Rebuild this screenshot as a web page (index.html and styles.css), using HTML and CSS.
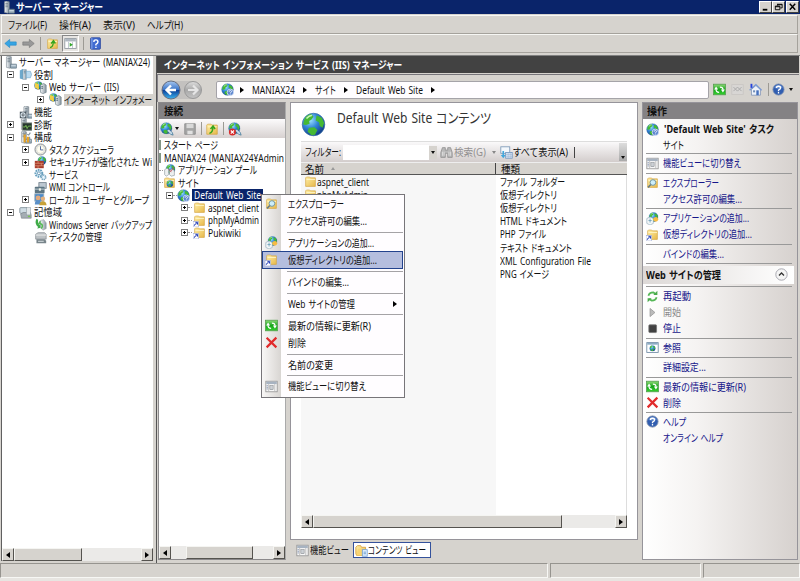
FILE: index.html
```html
<!DOCTYPE html>
<html lang="ja">
<head>
<meta charset="utf-8">
<title>サーバー マネージャー</title>
<link rel="stylesheet" href="styles.css">
</head>
<body>
<svg class="sprite" aria-hidden="true">
<defs>
<radialGradient id="sea" cx=".35" cy=".3" r=".8"><stop offset="0" stop-color="#9ee4ff"/><stop offset=".45" stop-color="#3185d8"/><stop offset="1" stop-color="#0b2d79"/></radialGradient>
<linearGradient id="gold" x2="1" y2="1"><stop offset="0" stop-color="#fff0a8"/><stop offset="1" stop-color="#e7b84a"/></linearGradient>
<linearGradient id="metal" x2="1"><stop offset="0" stop-color="#f2f5f7"/><stop offset="1" stop-color="#8996a0"/></linearGradient>
<linearGradient id="blueb" y2="1" x2="0"><stop offset="0" stop-color="#a8c8f0"/><stop offset=".48" stop-color="#3a74c8"/><stop offset=".52" stop-color="#0c4199"/><stop offset="1" stop-color="#3cb5f0"/></linearGradient>
<linearGradient id="greyb" y2="1" x2="0"><stop offset="0" stop-color="#dedede"/><stop offset=".5" stop-color="#a8a8a8"/><stop offset="1" stop-color="#c4c4c4"/></linearGradient>
<linearGradient id="green" y2="1" x2="0"><stop offset="0" stop-color="#8fdc78"/><stop offset=".5" stop-color="#19a51c"/><stop offset="1" stop-color="#35d22f"/></linearGradient>
</defs>
<symbol id="globe" viewBox="0 0 16 16"><circle cx="8" cy="8" r="7.2" fill="url(#sea)" stroke="#376fa6" stroke-width=".5"/><path d="M2 5 Q3 2 6.5 1.3 L8 3 6.6 5 5.2 5.8 5.5 7.5 3.2 8.3 1.4 8z M10 2 L13.3 3.6 14.8 7 13.8 10 12 9 11.5 6.5 9.4 5.5z M5 10 L8.6 9.7 10.5 11.5 9 14.5 6.8 14.8 4.2 12.6z" fill="#45b934"/><path d="M3.5 4.2 Q5.5 2 7 2.2" stroke="#c9f5b6" fill="none"/></symbol>
<symbol id="folder" viewBox="0 0 16 16"><path d="M2 3.5 L3 2.5 H7 L8 3.5 H14 V14 H2z" fill="url(#gold)" stroke="#d3a442" stroke-width=".8"/><path d="M3 5.5 H13.5" stroke="#fff8cc"/></symbol>
<symbol id="vdir" viewBox="0 0 16 16"><use href="#folder"/><rect y="9" width="7" height="7" fill="#fff" stroke="#7f90cc" stroke-width=".6"/><path d="M1.5 14.5 Q1.8 12 4.5 11.8 M3 10.3 H5.5 V13" fill="none" stroke="#1934b3" stroke-width="1.2"/></symbol>
<symbol id="up" viewBox="0 0 16 16"><use href="#folder"/><path d="M5 13 Q9 12 9 6 M6.3 8 L9.2 4.5 11.5 8" stroke="#35a51f" stroke-width="1.7" fill="none"/></symbol>
<symbol id="server" viewBox="0 0 16 16"><path d="M3 1 L5 0 9 1 V14 L7 15 3 14z" fill="url(#metal)" stroke="#75828b" stroke-width=".7"/><path d="M4.2 3 H7.4 M4.2 5 H7.4 M4.2 7 H7.4" stroke="#5c6e79" stroke-width=".8"/><rect x="8" y="10" width="7.5" height="5" rx=".5" fill="#93a7b5" stroke="#586d7b" stroke-width=".7"/><path d="M9 12 H14.5" stroke="#e7f2f8"/></symbol>
<symbol id="role" viewBox="0 0 16 16"><path d="M1 3 L5 1 V14 L1 13z" fill="#6ea9cc"/><path d="M5 2 H9 V14 H5z" fill="url(#metal)" stroke="#7594a8" stroke-width=".7"/><path d="M9 4 H14 L15.5 8 14 12 H9z" fill="#b9daf0" stroke="#65a1c6" stroke-width=".7"/><path d="M6 4 H8 M6 6 H8" stroke="#547f98"/></symbol>
<symbol id="webserver" viewBox="0 0 16 16"><g transform="scale(.68)"><use href="#globe" width="16" height="16"/></g><path d="M1 2 L6 4 V11 L1 8z" fill="#f1ce45"/><path d="M8 5 L12 3 15 5 V14 L11 15.5 8 14z" fill="url(#metal)" stroke="#60747e" stroke-width=".7"/><path d="M9 7 H11 M9 9 H11" stroke="#36525e"/></symbol>
<symbol id="feature" viewBox="0 0 16 16"><g transform="translate(3 0)"><use href="#server" width="16" height="16"/></g><rect x="1" y="7" width="8" height="8" fill="#4a565f"/><circle cx="5" cy="11" r="2.5" fill="none" stroke="#dde8ef" stroke-width="1.4"/><circle cx="5" cy="11" r=".8" fill="#fff"/></symbol>
<symbol id="diag" viewBox="0 0 16 16"><use href="#server"/><rect x="4" y="6" width="12" height="9" fill="#27372e" stroke="#8a958d"/><path d="M5 11 H7.5 L8.5 9 10 13 11.5 10 H15" fill="none" stroke="#83cf58"/></symbol>
<symbol id="config" viewBox="0 0 16 16"><use href="#server"/><path d="M7 3 V14 M11 7 V14" stroke="#eaa321" stroke-width="2.5"/><path d="M5 2 L7 4 9 2 M14 2 L12 5 10 4 M13 7 V14" fill="none" stroke="#8b989f" stroke-width="1.5"/></symbol>
<symbol id="clock" viewBox="0 0 16 16"><circle cx="8" cy="8" r="6.8" fill="#e5e8e7" stroke="#898d91" stroke-width="1.2"/><circle cx="8" cy="8" r="4.8" fill="#fffdf1" stroke="#c9c9bb" stroke-width=".6"/><path d="M8 4 V8.5 H11.4" fill="none" stroke="#536ba2" stroke-width="1.2"/></symbol>
<symbol id="firewall" viewBox="0 0 16 16"><g transform="translate(4 0) scale(.72)"><use href="#globe" width="16" height="16"/></g><rect x="1" y="6" width="11" height="9" fill="#a93d2b"/><path d="M1 9 H12 M1 12 H12 M5 6 V9 M9 9 V12 M5 12 V15" stroke="#e19a7f" stroke-width=".8"/></symbol>
<symbol id="gear" viewBox="0 0 16 16"><circle cx="6" cy="6.5" r="4.2" fill="#e1f1fb" stroke="#669ebd" stroke-width="2.4" stroke-dasharray="2 1"/><circle cx="6" cy="6.5" r="1.8" fill="#fff" stroke="#568aaa"/><circle cx="11.7" cy="11.5" r="2.7" fill="#e8f6ff" stroke="#79a7c0" stroke-width="2" stroke-dasharray="1.5 .7"/></symbol>
<symbol id="wmi" viewBox="0 0 16 16"><rect x="6" y="2" width="9" height="7" fill="#bdc8d1" stroke="#6f7e89"/><rect x="1" y="7" width="12" height="8" rx="1" fill="#5d7582"/><path d="M1 10 H13" stroke="#d2dde2"/><rect x="6" y="9" width="2.5" height="3" fill="#f0f3e9"/></symbol>
<symbol id="users" viewBox="0 0 16 16"><rect x="1" y="1" width="11" height="9" fill="#4d8ccc" stroke="#9badb8"/><circle cx="5" cy="6" r="3" fill="#e3aa7d"/><path d="M1 14 Q1 9 5 9 T9 14z" fill="#5b90c8"/><circle cx="11" cy="7" r="2.7" fill="#e4b27f"/><path d="M6.5 15 Q7 10 11 10 T15.5 15z" fill="#c8a238"/></symbol>
<symbol id="storage" viewBox="0 0 16 16"><rect x="1" y="2" width="9" height="7" rx="1" fill="#cfdce3" stroke="#768791"/><path d="M2 10 L5 8 H14 L15 11 V15 H3z" fill="#a4adb3" stroke="#717b81" stroke-width=".7"/><rect x="9" y="2" width="5" height="9" fill="#e2e7e9" stroke="#85949c" stroke-width=".6"/><rect x="11" y="12" width="3" height="1.3" fill="#70cc38"/></symbol>
<symbol id="backup" viewBox="0 0 16 16"><path d="M3 1 Q0 7 5 11 L4 13 9 12 8 7 7 9 Q4 6 5 2z" fill="#3faa48"/><path d="M8 3 L12 2 15 6 V13 L11 15 8 12z" fill="url(#metal)" stroke="#87939a" stroke-width=".6"/><path d="M8 4 L6 7 H8 Q12 8 9 13" fill="none" stroke="#55b956" stroke-width="2"/></symbol>
<symbol id="disk" viewBox="0 0 16 16"><path d="M2 4 L5 2 H13 L15 4 V10 H2z" fill="#bdc2c5" stroke="#737b80" stroke-width=".7"/><path d="M2 5 H15" stroke="#f5f5f5"/><path d="M3 10 H13 L15 12 V15 H3z" fill="#78858b"/><rect x="5" y="12" width="7" height="1.5" fill="#c5cdd0"/></symbol>
<symbol id="back" viewBox="0 0 16 16"><path d="M1 8 L7 3 V6 H15 V10 H7 V13z" fill="#37a5e4" stroke="#2388c8" stroke-width=".8"/></symbol>
<symbol id="fwd" viewBox="0 0 16 16"><path d="M15 8 L9 3 V6 H1 V10 H9 V13z" fill="#999" stroke="#777" stroke-width=".8"/></symbol>
<symbol id="window" viewBox="0 0 16 16"><rect x="1" y="2" width="14" height="12" fill="#fff" stroke="#889099"/><path d="M1.5 4 H14.5" stroke="#aeb7c0" stroke-width="3"/><path d="M5.5 6 V13.5 M10.5 6 V13.5" stroke="#b1bbc6"/><path d="M11 9.5 L7 7 V12z" fill="#34a72d"/></symbol>
<symbol id="feat" viewBox="0 0 16 16"><rect x="1" y="1.5" width="14" height="13" fill="#f7f7f7" stroke="#929292"/><rect x="1.5" y="2" width="13" height="3" fill="#a7b3c1"/><path d="M4.5 5 V14 M12 5 V14" stroke="#b7b7b7"/><rect x="6" y="7" width="4" height="5" fill="#ccd1d5" stroke="#777b80" stroke-width=".6"/><path d="M2 7 H3.5 M2 9 H3.5 M2 11 H3.5" stroke="#6c7fa2"/></symbol>
<symbol id="helpbook" viewBox="0 0 16 16"><rect x="2" y="1" width="12" height="14" rx="1" fill="#416bd1" stroke="#26429d"/><path d="M3.5 1 V15" stroke="#9bb7f1"/><path d="M6 6 Q6 3.5 8.5 3.5 T11 6 Q11 7.5 8.5 9 V10.5 M8.5 12 V13.5" fill="none" stroke="#fff" stroke-width="1.7"/></symbol>
<symbol id="help" viewBox="0 0 16 16"><circle cx="8" cy="8" r="7" fill="#315eb0" stroke="#9ba6b7"/><path d="M3 6 Q4 2.5 8 2.5 T13 6 Q8 8 3 6" fill="#8aafe8" opacity=".6"/><path d="M5.5 6 Q5.5 4 8 4 T10.5 6 Q10.5 7.3 8 8.7 V10 M8 11.2 V12.8" fill="none" stroke="#fff" stroke-width="1.6"/></symbol>
<symbol id="siteq" viewBox="0 0 16 16"><use href="#globe"/><circle cx="11.5" cy="11.5" r="4" fill="#5b84cf" stroke="#dce7f8"/><path d="M10 10.7 Q10 9.3 11.5 9.3 T13 10.7 Q13 11.5 11.5 12 V12.7 M11.5 13.3 V14.2" fill="none" stroke="#fff"/></symbol>
<symbol id="connect" viewBox="0 0 16 16"><g transform="scale(.9)"><use href="#globe" width="16" height="16"/></g><path d="M8 10 L10 8 14 12 15 15 12 14z" fill="#c8ddea" stroke="#356f92" stroke-width=".8"/></symbol>
<symbol id="disconnect" viewBox="0 0 16 16"><use href="#connect"/><circle cx="5" cy="11.5" r="4" fill="#d82b2b"/><path d="M3.2 9.7 L6.8 13.3 M6.8 9.7 L3.2 13.3" stroke="#fff" stroke-width="1.3"/></symbol>
<symbol id="save" viewBox="0 0 16 16"><path d="M2 2 H14 V14 H2z" fill="#a5a5a5" stroke="#8d8d8d"/><rect x="4" y="2" width="8" height="5" fill="#d9d9d9"/><rect x="5" y="10" width="6" height="4" fill="#e1e1e1"/></symbol>
<symbol id="pool" viewBox="0 0 16 16"><g transform="translate(3 0) scale(.78)"><use href="#globe" width="16" height="16"/></g><path d="M2 7 L5 5 7 7 V13 L4 15 2 13z M8 8 L11 6 14 8 V14 L10 15 8 13z" fill="#edf0f0" stroke="#7f8c92" stroke-width=".7"/><path d="M7 6 L10 10 M13 4 L10 9" stroke="#bd4653"/></symbol>
<symbol id="sites" viewBox="0 0 16 16"><use href="#folder"/><g transform="translate(4 5) scale(.56)"><use href="#globe" width="16" height="16"/></g></symbol>
<symbol id="explore" viewBox="0 0 16 16"><use href="#folder"/><circle cx="8.5" cy="8" r="3.5" fill="#cceefa" stroke="#7095a1" stroke-width="1.2"/><path d="M6 10.5 L2.5 14" stroke="#687d87" stroke-width="2"/></symbol>
<symbol id="app" viewBox="0 0 16 16"><g transform="translate(3 0) scale(.78)"><use href="#globe" width="16" height="16"/></g><path d="M1 8 L5 6 9 8 V14 L5 16 1 14z" fill="#f4f7f8" stroke="#8ea8bb" stroke-width=".8"/><path d="M5 8 V13 M3 10.5 H7" stroke="#6a9fb9"/><circle cx="12" cy="9" r="3" fill="#f7bc43"/></symbol>
<symbol id="refresh" viewBox="0 0 16 16"><rect x=".7" y="1.5" width="14.6" height="13" fill="url(#green)" stroke="#559d50"/><path d="M7.5 11.5 Q3.6 11.5 3.8 7.5 M8.5 5 Q12.4 5 12.2 8.5" fill="none" stroke="#fff" stroke-width="1.6"/><path d="M1.3 8 L3.8 4.3 6.3 8z M9.7 8 H14.7 L12.2 11.8z" fill="#fff"/></symbol>
<symbol id="stopnav" viewBox="0 0 16 16"><rect x="1" y="2" width="14" height="12" fill="#d8d6d4" stroke="#c8c5c2"/><path d="M3 5 L8 10 M8 5 L3 10 M8 5 L13 10 M13 5 L8 10" stroke="#aaa" stroke-width="1.2"/></symbol>
<symbol id="home" viewBox="0 0 16 16"><path d="M3 8 V15 H14 V8 L8.5 3z" fill="#eef3fa" stroke="#8092b5"/><path d="M.8 9 L8.5 2 15.5 9" fill="none" stroke="#7798d5" stroke-width="1.6"/><path d="M3 1 V6" stroke="#2542df" stroke-width="2.3"/><rect x="9" y="9" width="3" height="6" fill="#4671bd"/><rect x="5" y="9" width="2.5" height="2.5" fill="#718eb8"/></symbol>
<symbol id="delete" viewBox="0 0 16 16"><path d="M2 2.2 L14 14 M14 2 L2 14" stroke="#e12a2b" stroke-width="2.7"/></symbol>
<symbol id="restart" viewBox="0 0 16 16"><path d="M3 7 Q4 3 9 3 L12 5 M13 9 Q12 13 7 13 L4 11" fill="none" stroke="#55b756" stroke-width="2.2"/><path d="M9 6 H14 V1z M7 10 H2 V15z" fill="#49aa4b"/></symbol>
<symbol id="play" viewBox="0 0 16 16"><path d="M5 3 L11 8 5 13z" fill="#bbb" stroke="#999"/></symbol>
<symbol id="stop" viewBox="0 0 16 16"><rect x="3.5" y="3.5" width="9.5" height="9.5" rx="1" fill="#414141" stroke="#777"/></symbol>
<symbol id="browse" viewBox="0 0 16 16"><rect x="1" y="2" width="14" height="12" fill="#fff" stroke="#66839e"/><path d="M1.5 3.5 H14.5" stroke="#8aaac4" stroke-width="2"/><g transform="translate(4 5) scale(.5)"><use href="#globe" width="16" height="16"/></g></symbol>
<symbol id="binoc" viewBox="0 0 16 16"><path d="M3 2 H6.5 V5 H9.5 V2 H13 L15 8 V14 H9.5 V9 H6.5 V14 H1 V8z" fill="#b8b8b8" stroke="#909090"/><path d="M3 7 V12 M5 7 V12 M11 7 V12 M13 7 V12" stroke="#e3e3e3"/></symbol>
<symbol id="showall" viewBox="0 0 16 16"><rect x="1" y="1" width="11" height="8" fill="#f4f8fc" stroke="#7895b4"/><rect x="7" y="8" width="8" height="7" fill="#e7f0fa" stroke="#6c92be"/><path d="M7 10.3 H15 M7 12.6 H15 M10 8 V15 M12.5 8 V15" stroke="#91acd0" stroke-width=".7"/><path d="M3 6 V11 H1 L4 15 7 11 H5 V6z" fill="#42a7dc"/></symbol>
<symbol id="content" viewBox="0 0 16 16"><path d="M1 12 V4 L3 2 H7 L8 4 H13 V7 L10 14 H2z" fill="url(#gold)" stroke="#d49c37"/><path d="M4 6 H14 L10 14 H2z" fill="#f9d472"/><rect x="9" y="7" width="6" height="8" fill="#e6f3ff" stroke="#6d9bd0"/><path d="M10.5 10 H13.5 M10.5 12 H13.5" stroke="#518bc5"/></symbol>
</svg>

<div class="app">
<header class="titlebar"><svg class="i"><use href="#server"/></svg><b data-w="87">サーバー マネージャー</b>
<div class="winbtns"><i class="wb"><svg viewBox="0 0 12 11"><path d="M3 8.5H8" stroke="#000" stroke-width="2"/></svg></i><i class="wb"><svg viewBox="0 0 12 11"><path d="M5 2.5H10V6.5H8M5 2V4M2.5 4.5H7.5V8.5H2.5zM2.5 5.2H7.5M5 3H10" fill="none" stroke="#000"/></svg></i><i class="wb last"><svg viewBox="0 0 12 11"><path d="M3 2L9 8.5M9 2L3 8.5" stroke="#000" stroke-width="1.6"/></svg></i></div></header>
<nav class="menubar"><span data-w="39">ファイル(F)</span><span data-w="32">操作(A)</span><span data-w="32">表示(V)</span><span data-w="36">ヘルプ(H)</span></nav>
<div class="toolbar"><svg class="i"><use href="#back"/></svg><svg class="i fw"><use href="#fwd"/></svg><i class="vs"></i><svg class="i"><use href="#up"/></svg><span class="pressed"><svg class="i"><use href="#window"/></svg></span><i class="vs v2"></i><svg class="i"><use href="#helpbook"/></svg></div>

<div class="main">
<aside class="left">
<div class="tree">
<div class="row"><svg class="i"><use href="#server"/></svg><span data-w="131">サーバー マネージャー (MANIAX24)</span></div>
<div class="row l0"><i class="pm"></i><svg class="i"><use href="#role"/></svg><span data-w="19">役割</span></div>
<div class="row l1"><i class="pm"></i><svg class="i"><use href="#webserver"/></svg><span data-w="70">Web サーバー (IIS)</span></div>
<div class="row l2"><i class="pm plus"></i><svg class="i"><use href="#webserver"/></svg><span class="sel"><span data-w="88">インターネット インフォメー</span></span></div>
<div class="row l0"><i class="pm none"></i><svg class="i"><use href="#feature"/></svg><span data-w="18">機能</span></div>
<div class="row l0"><i class="pm plus"></i><svg class="i"><use href="#diag"/></svg><span data-w="18">診断</span></div>
<div class="row l0"><i class="pm"></i><svg class="i"><use href="#config"/></svg><span data-w="18">構成</span></div>
<div class="row l1"><i class="pm plus"></i><svg class="i"><use href="#clock"/></svg><span data-w="65">タスク スケジューラ</span></div>
<div class="row l1"><i class="pm plus"></i><svg class="i"><use href="#firewall"/></svg><span data-w="103">セキュリティが強化された Wi</span></div>
<div class="row l1"><i class="pm none"></i><svg class="i"><use href="#gear"/></svg><span data-w="29">サービス</span></div>
<div class="row l1"><i class="pm none"></i><svg class="i"><use href="#wmi"/></svg><span data-w="61">WMI コントロール</span></div>
<div class="row l1"><i class="pm plus"></i><svg class="i"><use href="#users"/></svg><span data-w="100">ローカル ユーザーとグループ</span></div>
<div class="row l0"><i class="pm"></i><svg class="i"><use href="#storage"/></svg><span data-w="28">記憶域</span></div>
<div class="row l1"><i class="pm none"></i><svg class="i"><use href="#backup"/></svg><span data-w="103">Windows Server バックアップ</span></div>
<div class="row l1"><i class="pm none"></i><svg class="i"><use href="#disk"/></svg><span data-w="53">ディスクの管理</span></div>
</div>
<div class="scroll"><i class="sb la"></i><i class="thumb t1"></i><i class="gap"></i><i class="sb ra"></i></div>
</aside>

<section class="iis">
<h1><span data-w="238">インターネット インフォメーション サービス (IIS) マネージャー</span></h1>
<div class="addr">
<svg class="navb" viewBox="0 0 42 20"><path d="M10 1H31Q40 1 40 10T31 19H10Q1 19 1 10T10 1" fill="#c3c1bf"/><circle cx="10" cy="10" r="9" fill="url(#blueb)" stroke="#666e80"/><path d="M15 10H6M10 5.5L5.5 10L10 14.5" fill="none" stroke="#fff" stroke-width="2.4"/><circle cx="32" cy="10" r="8.5" fill="url(#greyb)" stroke="#999"/><path d="M27 10H36M32 5.5L36.5 10L32 14.5" fill="none" stroke="#e5e5e5" stroke-width="2.2"/></svg>
<div class="crumbs"><svg class="i"><use href="#siteq"/></svg><i class="ar a1"></i><span data-w="43">MANIAX24</span><i class="ar"></i><span data-w="21">サイト</span><i class="ar"></i><span data-w="67">Default Web Site</span><i class="ar"></i></div>
<svg class="i r1"><use href="#refresh"/></svg><svg class="i r2"><use href="#stopnav"/></svg><svg class="i r3"><use href="#home"/></svg><i class="vs v3"></i><svg class="i"><use href="#help"/></svg><i class="dn d3"></i>
</div>
<div class="cols">
<div class="conn">
<h2><span data-w="19">接続</span></h2>
<div class="ctools"><svg class="i"><use href="#connect"/></svg><i class="dn"></i><svg class="i c2"><use href="#save"/></svg><i class="vs"></i><svg class="i c3"><use href="#up"/></svg><i class="vs"></i><svg class="i c4"><use href="#disconnect"/></svg></div>
<div class="tree ctree">
<div class="row s0"><i class="edge"></i><span data-w="54">スタート ページ</span></div>
<div class="row s0"><i class="edge"></i><span data-w="120">MANIAX24 (MANIAX24¥Admin</span></div>
<div class="row s1"><i class="ln"></i><svg class="i"><use href="#pool"/></svg><span data-w="79">アプリケーション プール</span></div>
<div class="row s1"><i class="ln"></i><svg class="i"><use href="#sites"/></svg><span data-w="21">サイト</span></div>
<div class="row s2"><i class="pm"></i><i class="ln"></i><svg class="i"><use href="#siteq"/></svg><span class="hot"><span data-w="67">Default Web Site</span></span></div>
<div class="row s3"><i class="pm plus"></i><i class="ln"></i><svg class="i"><use href="#folder"/></svg><span data-w="51">aspnet_client</span></div>
<div class="row s3"><i class="pm plus"></i><i class="ln"></i><svg class="i"><use href="#vdir"/></svg><span data-w="51">phpMyAdmin</span></div>
<div class="row s3"><i class="pm plus"></i><i class="ln"></i><svg class="i"><use href="#vdir"/></svg><span data-w="33">Pukiwiki</span></div>
</div>
<div class="scroll"><i class="sb la"></i><i class="gap g1"></i><i class="thumb t2"></i><i class="gap"></i><i class="sb ra"></i></div>
</div>

<div class="center">
<div class="content">
<div class="ptitle"><svg><use href="#globe"/></svg><span data-w="154">Default Web Site コンテンツ</span></div>
<div class="filter"><span data-w="36">フィルター:</span><i class="input"></i><i class="combo"><i class="dn"></i></i><svg class="i"><use href="#binoc"/></svg><span class="dim" data-w="32">検索(G)</span><i class="dn dim2"></i><svg class="i"><use href="#showall"/></svg><span data-w="55">すべて表示(A)</span><i class="vs v4"></i><i class="more"><i class="dn"></i></i></div>
<div class="thead"><div class="c1"><span data-w="19">名前</span><i class="sort"></i></div><div class="c2h"><span data-w="19">種類</span></div></div>
<div class="list">
<div class="names"><div class="f"><svg class="i"><use href="#folder"/></svg><span data-w="52">aspnet_client</span></div><div class="f"><svg class="i"><use href="#vdir"/></svg><span data-w="51">phpMyAdmin</span></div></div>
<div class="kinds"><div class="f"><span data-w="65">ファイル フォルダー</span></div><div class="f"><span data-w="57">仮想ディレクトリ</span></div><div class="f"><span data-w="57">仮想ディレクトリ</span></div><div class="f"><span data-w="67">HTML ドキュメント</span></div><div class="f"><span data-w="46">PHP ファイル</span></div><div class="f"><span data-w="72">テキスト ドキュメント</span></div><div class="f"><span data-w="91">XML Configuration File</span></div><div class="f"><span data-w="49">PNG イメージ</span></div></div>
</div>
<div class="scroll"><i class="sb la"></i><i class="thumb t3"></i><i class="gap"></i><i class="sb ra"></i></div>
</div>
<div class="tabs"><svg class="i"><use href="#feat"/></svg><span data-w="39">機能ビュー</span><span class="tab"><svg class="i"><use href="#content"/></svg><span data-w="58">コンテンツ ビュー</span></span></div>
</div>

<aside class="actions">
<h2><span data-w="20">操作</span></h2>
<div class="alist">
<div class="a head"><svg class="i"><use href="#siteq"/></svg><b data-w="110">'Default Web Site' タスク</b></div>
<div class="a sub"><span data-w="21">サイト</span></div><hr>
<div class="a"><svg class="i"><use href="#feat"/></svg><span data-w="78">機能ビューに切り替え</span></div><hr>
<div class="a"><svg class="i"><use href="#explore"/></svg><span data-w="56">エクスプローラー</span></div>
<div class="a"><i class="i"></i><span data-w="79">アクセス許可の編集...</span></div><hr>
<div class="a"><svg class="i"><use href="#app"/></svg><span data-w="86">アプリケーションの追加...</span></div>
<div class="a"><svg class="i"><use href="#vdir"/></svg><span data-w="89">仮想ディレクトリの追加...</span></div><hr>
<div class="a"><i class="i"></i><span data-w="61">バインドの編集...</span></div><hr>
</div>
<div class="group"><b data-w="75">Web サイトの管理</b><svg viewBox="0 0 13 13"><circle cx="6.5" cy="6.5" r="5.7" fill="#f5f5f5" stroke="#a8a8b0"/><path d="M4 7.5L6.5 5L9 7.5" fill="none" stroke="#333" stroke-width="1.3"/></svg></div>
<div class="alist second"><hr class="tight">
<div class="a"><svg class="i"><use href="#restart"/></svg><span data-w="28">再起動</span></div>
<div class="a off"><svg class="i"><use href="#play"/></svg><span data-w="18">開始</span></div>
<div class="a"><svg class="i"><use href="#stop"/></svg><span data-w="18">停止</span></div><hr>
<div class="a"><svg class="i"><use href="#browse"/></svg><span data-w="18">参照</span></div><hr>
<div class="a"><i class="i"></i><span data-w="43">詳細設定...</span></div><hr>
<div class="a"><svg class="i"><use href="#refresh"/></svg><span data-w="83">最新の情報に更新(R)</span></div>
<div class="a"><svg class="i"><use href="#delete"/></svg><span data-w="18">削除</span></div><hr>
<div class="a"><svg class="i"><use href="#help"/></svg><span data-w="23">ヘルプ</span></div>
<div class="a"><i class="i"></i><span data-w="60">オンライン ヘルプ</span></div>
</div>
</aside>
</div>
</section>
</div>
<footer><i class="p1"></i><i class="p2"></i><i class="p3"></i></footer>

<div class="popup">
<div class="m"><svg class="i"><use href="#explore"/></svg><span data-w="56">エクスプローラー</span></div>
<div class="m"><i class="i"></i><span data-w="79">アクセス許可の編集...</span></div><hr>
<div class="m"><svg class="i"><use href="#app"/></svg><span data-w="86">アプリケーションの追加...</span></div>
<div class="m on"><svg class="i"><use href="#vdir"/></svg><span data-w="89">仮想ディレクトリの追加...</span></div><hr>
<div class="m"><i class="i"></i><span data-w="61">バインドの編集...</span></div><hr>
<div class="m"><i class="i"></i><span data-w="67">Web サイトの管理</span><i class="ar"></i></div><hr>
<div class="m"><svg class="i"><use href="#refresh"/></svg><span data-w="83">最新の情報に更新(R)</span></div>
<div class="m"><svg class="i"><use href="#delete"/></svg><span data-w="18">削除</span></div><hr>
<div class="m"><i class="i"></i><span data-w="45">名前の変更</span></div><hr>
<div class="m"><svg class="i"><use href="#feat"/></svg><span data-w="78">機能ビューに切り替え</span></div>
</div>
</div>
<script src="fit.js"></script>
</body>
</html>
```
FILE: fit.js
```js
document.querySelectorAll('[data-w]').forEach(function (el) {
  var natural = el.getBoundingClientRect().width;
  var want = Number(el.dataset.w);
  el.style.transform = 'scaleX(' + want / natural + ')';
  el.style.marginRight = (want - natural) + 'px';
});
```
FILE: styles.css
```css
* { box-sizing: border-box; }
body { margin: 0; overflow: hidden; }
.sprite { position: absolute; width: 0; height: 0; }
.app {
  position: relative; width: 800px; height: 581px; overflow: hidden;
  display: flex; flex-direction: column; background: #d6d3ce; color: #111;
  font: 10.5px/12px "Noto Sans", "Noto Sans CJK JP", sans-serif;
  font-feature-settings: "palt"; word-spacing: 1px;
}
[data-w] { display: inline-block; flex: none; white-space: pre; transform-origin: 0 50%; }
.i { width: 13px; height: 13px; flex: none; display: block; }
h1, h2 { margin: 0; font-size: 10.5px; font-weight: 700; }
hr { margin: 0; border: 0; }

.titlebar { height: 14px; flex: none; background: #0a246a; color: #fff; display: flex; align-items: center; padding-left: 2px; gap: 1px; }
.winbtns { margin-left: auto; display: flex; }
.wb { width: 13px; height: 12px; background: #d6d3ce; border: 1px solid; border-color: #fff #404040 #404040 #fff; }
.wb svg { display: block; width: 11px; height: 10px; }
.wb.last { margin-left: 1px; margin-right: 1px; }
.menubar { height: 19px; flex: none; margin: 1px 2px 0 1px; padding-left: 6px; border: 1px solid #a5a29c; border-top-color: #f7f7f4; border-left-color: #f7f7f4; display: flex; align-items: center; gap: 12px; }
.toolbar { height: 19px; flex: none; margin: 0 2px 0 1px; padding-left: 2px; border: 1px solid #a5a29c; border-top-color: #f7f7f4; border-left-color: #f7f7f4; display: flex; align-items: center; }
.fw { margin-left: 5px; }
.vs { width: 1px; height: 13px; background: #9c9a94; flex: none; }
.toolbar .vs { margin: 0 5px 0 5px; }
.toolbar .v2 { margin: 0 5px 0 4px; }
.pressed { margin-left: 3px; width: 17px; height: 17px; border: 1px solid; border-color: #888 #fff #fff #888; background: #e7e5e2; display: grid; place-items: center; }

.main { flex: none; height: 508px; margin-top: 2px; display: flex; border-top: 1px solid #808080; }
.left { width: 152px; margin-left: 1px; border-left: 1px solid #606060; background: #fff; overflow: hidden; display: flex; flex-direction: column; height: 505px; }
.tree { flex: 1; overflow: hidden; min-height: 0; }
.row { height: 12.53px; display: flex; align-items: center; white-space: nowrap; }
.left .row { padding-left: 2px; }
.left .row > .i { margin-right: 2px; }
.left .l0 { padding-left: 5px; }
.left .l1 { padding-left: 20px; }
.left .l2 { padding-left: 35px; }
.left .l0 > .pm, .left .l1 > .pm, .left .l2 > .pm { margin-right: 5px; }
.pm { width: 7px; height: 7px; border: 1px solid #808080; flex: none; background: linear-gradient(#000, #000) center/3px 1px no-repeat #fff; }
.pm.plus { background: linear-gradient(#000, #000) center/3px 1px no-repeat, linear-gradient(#000, #000) center/1px 3px no-repeat #fff; }
.pm.none { visibility: hidden; }
.sel { background: #d6d3ce; height: 12px; display: flex; align-items: center; width: 95px; }

.scroll { height: 13px; flex: none; display: flex; background: #ebeae8; }
.sb, .thumb { background: #d6d3ce; border: 1px solid; border-color: #f5f5f2 #55534f #55534f #f5f5f2; height: 13px; }
.sb { width: 12px; flex: none; display: grid; place-items: center; }
.sb::before { content: ""; border: 3px solid transparent; width: 0; height: 0; }
.la::before { border-right: 4px solid #000; border-left: 0; }
.ra::before { border-left: 4px solid #000; border-right: 0; }
.gap { flex: 1; }
.t1 { width: 68px; }
.g1 { flex: none; width: 15px; }
.t2 { width: 67px; }
.t3 { width: 249px; }

.iis { margin-left: 3px; width: 643px; border-left: 1px solid #555; }
.iis h1 { height: 17px; background: #424242; color: #fff; display: flex; align-items: center; padding-left: 7px; }
.addr { height: 28px; margin-top: 1px; border-top: 1px solid #77757a; border-left: 1px solid #858289; padding: 4px 0 2px 3px; display: flex; align-items: center; }
.navb { width: 42px; height: 20px; flex: none; }
.crumbs { width: 493px; height: 18px; margin-left: 13px; background: #fffdff; border: 1px solid #a5a3a8; border-radius: 2px; display: flex; align-items: center; padding-left: 4px; }
.ar { width: 0; height: 0; border: 3px solid transparent; border-left: 4px solid #000; border-right: 0; flex: none; margin: 0 8px; }
.ar.a1 { margin-left: 6px; }
.r1 { margin-left: 4px; } .r2 { margin-left: 5px; } .r3 { margin-left: 5px; }
.v3 { margin: 0 3px 0 6px; }
.dn { width: 0; height: 0; border: 2.5px solid transparent; border-top: 3px solid #111; border-bottom: 0; flex: none; }
.d3 { margin-left: 4px; }

.cols { display: flex; margin-left: 1px; height: 459px; }
.conn { width: 128px; height: 458px; border: 1px solid #8b898b; border-right-color: #aaa; background: #fff; display: flex; flex-direction: column; overflow: hidden; }
.iis h2 { height: 16px; flex: none; background: #848284; display: flex; align-items: center; padding-left: 5px; color: #111; }
.ctools { height: 19px; flex: none; background: linear-gradient(#fcfbfc, #d7d1d0); display: flex; align-items: center; padding-left: 1px; }
.ctools .i { width: 14px; height: 14px; }
.ctools .dn { margin-left: 1px; }
.ctools .c2 { margin: 0 4px 0 4px; }
.ctools .c3 { margin: 0 4px 0 3px; }
.ctools .c4 { margin: 0 4px 0 4px; }
.ctree { padding-top: 1px; }
.edge { width: 2px; height: 10px; background: #829585; margin-right: 3px; flex: none; }
.ln { width: 4px; border-top: 1px dotted #999; flex: none; }
.s1 .i { margin-right: 2px; }
.s2 { padding-left: 7px; }
.s2 .i { margin-right: 2px; }
.s3 { padding-left: 22px; }
.s3 .i { margin: 0 2px 0 1px; }
.hot { background: #0a246a; color: #fff; height: 12px; display: flex; align-items: center; padding: 0 0 0 2px; width: 71px; }

.center { width: 348px; margin-left: 4px; display: flex; flex-direction: column; }
.content { height: 438px; flex: none; border: 1px solid #96949a; background: #fff; padding: 0 10px; }
.ptitle { height: 38px; display: flex; align-items: flex-start; font-size: 14px; line-height: 20px; color: #333; padding-top: 5px; }
.ptitle svg { width: 25px; height: 27px; margin: 3px 11px 0 0; }
.filter { height: 21px; width: 326px; display: flex; align-items: center; background: linear-gradient(#faf9fa, #d3cdcc); padding-left: 4px; border-top: 1px solid #ddd; }
.input { width: 86px; height: 15px; background: #fff; margin-left: 2px; }
.combo { width: 8px; height: 13px; background: #d6d3ce; display: grid; place-items: center; margin-right: 3px; }
.dim { color: #929090; margin-left: 1px; }
.dim2 { border-top-color: #888; margin: 0 4px 0 6px; }
.v4 { height: 11px; background: #444; margin-left: 6px; }
.more { margin-left: auto; width: 8px; height: 18px; background: linear-gradient(#ddd, #aaa); display: flex; align-items: flex-end; justify-content: center; padding-bottom: 2px; }
.thead { width: 326px; height: 13px; background: #d6d3ce; border-bottom: 1px solid #555; border-top: 1px solid #eee; display: flex; }
.c1 { width: 195px; border-right: 1px solid #444; display: flex; align-items: center; padding-left: 4px; }
.c2h { padding-left: 5px; display: flex; align-items: center; }
.sort { margin-left: 7px; border: 2px solid transparent; border-bottom: 3px solid #999; border-top: 0; }
.list { height: 340px; width: 326px; display: flex; border-right: 1px solid #ddd; }
.names { width: 195px; background: #f7f7f7; }
.f { height: 13.2px; display: flex; align-items: center; padding-left: 4px; }
.names .f { padding-left: 3px; }
.tabs { height: 20px; display: flex; align-items: center; padding-left: 6px; }
.tabs > span:first-of-type { margin-left: 1px; }
.tab { display: flex; align-items: center; width: 78px; height: 16px; border: 1px solid #34529c; background: #fff; margin-left: 4px; padding-left: 1px; }
.content .scroll { width: 326px; }

.actions { width: 156px; height: 458px; margin-left: 4px; border: 1px solid #96949a; background: linear-gradient(90deg, #fff, #f5f3f2 35%, #d6d1ce); }
.actions h2 { padding-left: 4px; }
.alist { padding: 2px 5px 0 3px; }
.a { height: 16px; display: flex; align-items: center; gap: 4px; color: #16168a; }
.a.head { color: #111; gap: 5px; }
.a.sub { height: 15px; padding-left: 17px; color: #111; }
.a.off { color: #888; }
.alist hr { height: 3.4px; background: linear-gradient(#999, #999) 0 60%/100% 1px no-repeat; }
.group { height: 18px; display: flex; align-items: center; justify-content: space-between; padding: 0 6px 0 3px; background: linear-gradient(90deg, #ddd9d7, #fff); margin-right: 3px; margin-top: 1px; }
.group svg { width: 13px; height: 13px; }
.second { padding-top: 1px; }

footer { height: 18px; flex: none; display: flex; gap: 2px; border-bottom: 3px solid #e7e5e1; }
footer i { height: 15px; border: 1px solid; border-color: #96948f #f7f7f4 #f7f7f4 #96948f; }
.p1 { width: 548px; } .p2 { width: 151px; } .p3 { flex: 1; }

.popup { position: absolute; left: 261px; top: 194px; width: 144px; height: 204px; border: 1px solid #777579; background: linear-gradient(90deg, #f8f7f6, #d8d5d2) 0 0/19px 100% no-repeat #fffdff; }
.m { height: 17.25px; display: flex; align-items: center; padding-left: 3px; }
.m .i { margin-right: 10px; }
.popup hr { height: 4.6px; margin-left: 25px; margin-right: 1px; background: linear-gradient(#a5a3a6, #a5a3a6) 0 60%/100% 1px no-repeat; }
.m.on { background: #b5bede; border: 1px solid #23438d; padding-left: 2px; margin: 0 1px 0 0; }
.m .ar { margin-left: auto; margin-right: 7px; }
```
